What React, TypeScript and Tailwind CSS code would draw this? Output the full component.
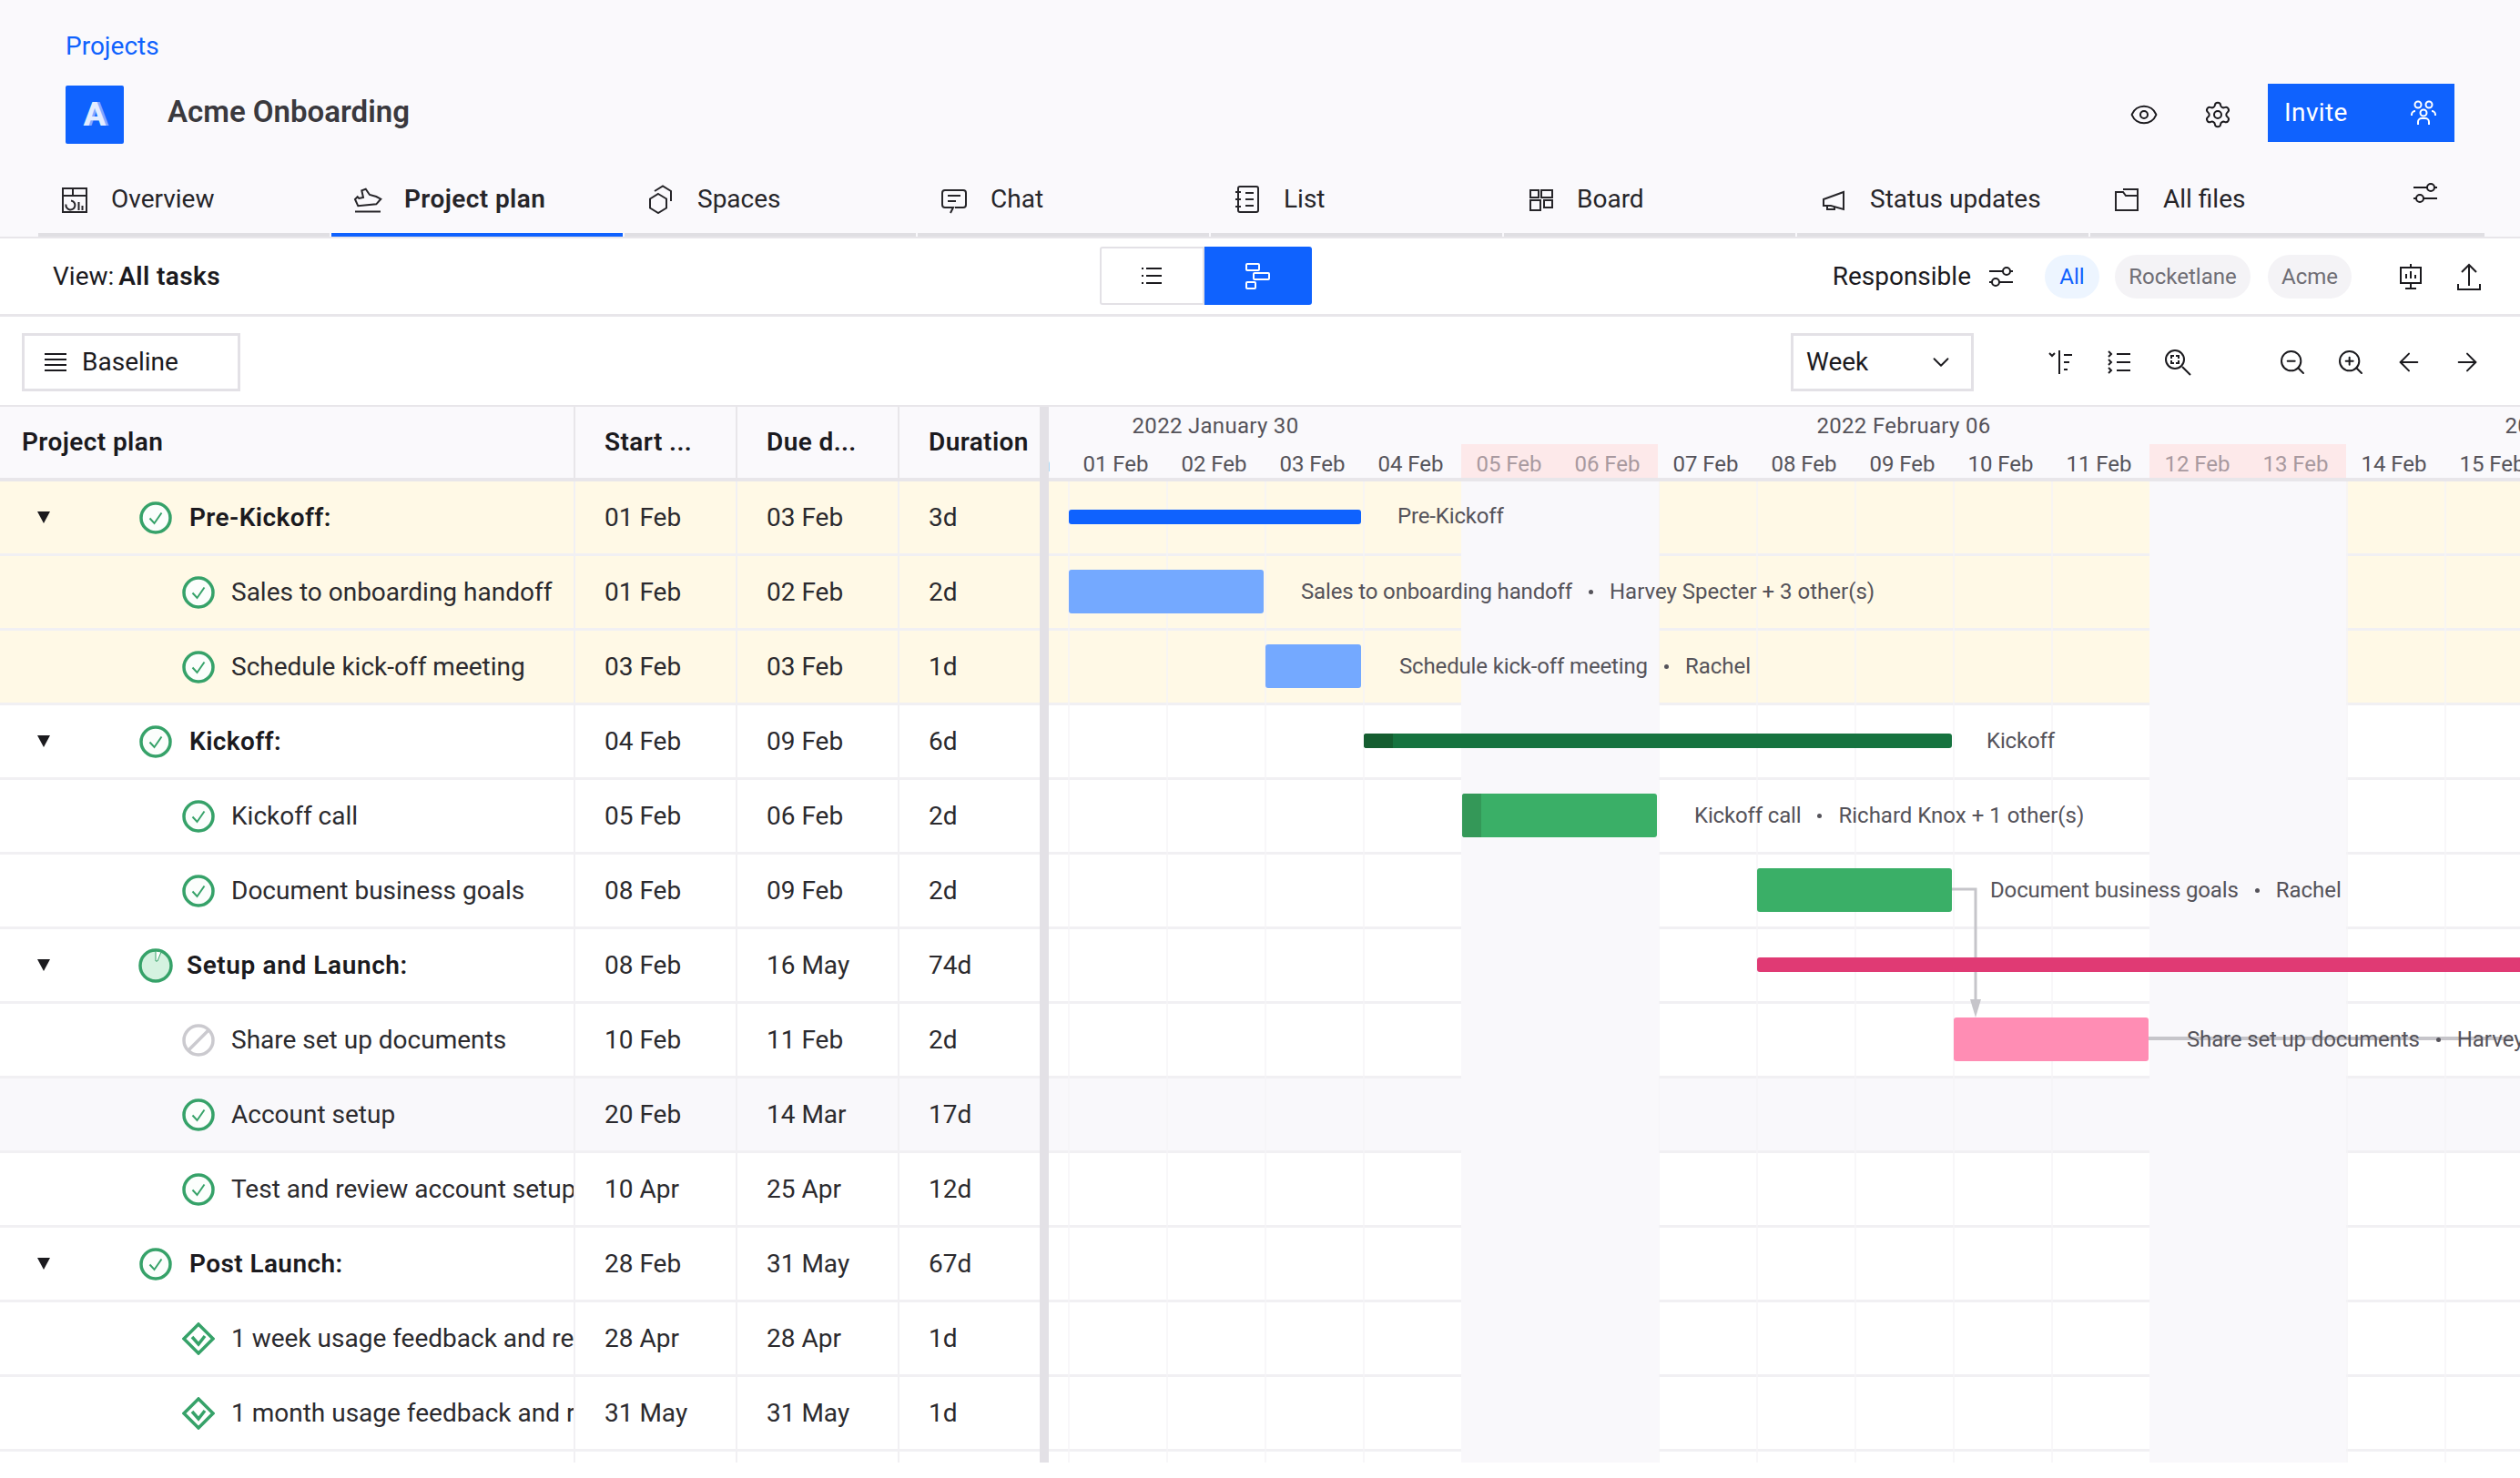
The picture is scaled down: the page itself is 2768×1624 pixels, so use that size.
import { ArrowLeft, ArrowRight, ChevronDown, Eye, Settings, ZoomIn, ZoomOut } from 'lucide-react'

type RowKind = 'done' | 'progress' | 'blocked' | 'milestone'

type Task = {
  name: string
  start: string
  due: string
  duration: string
  kind: RowKind
  group?: boolean
  tone?: 'yellow' | 'hover'
}

const tasks: Task[] = [
  { name: 'Pre-Kickoff:', start: '01 Feb', due: '03 Feb', duration: '3d', kind: 'done', group: true, tone: 'yellow' },
  { name: 'Sales to onboarding handoff', start: '01 Feb', due: '02 Feb', duration: '2d', kind: 'done', tone: 'yellow' },
  { name: 'Schedule kick-off meeting', start: '03 Feb', due: '03 Feb', duration: '1d', kind: 'done', tone: 'yellow' },
  { name: 'Kickoff:', start: '04 Feb', due: '09 Feb', duration: '6d', kind: 'done', group: true },
  { name: 'Kickoff call', start: '05 Feb', due: '06 Feb', duration: '2d', kind: 'done' },
  { name: 'Document business goals', start: '08 Feb', due: '09 Feb', duration: '2d', kind: 'done' },
  { name: 'Setup and Launch:', start: '08 Feb', due: '16 May', duration: '74d', kind: 'progress', group: true },
  { name: 'Share set up documents', start: '10 Feb', due: '11 Feb', duration: '2d', kind: 'blocked' },
  { name: 'Account setup', start: '20 Feb', due: '14 Mar', duration: '17d', kind: 'done', tone: 'hover' },
  { name: 'Test and review account setup', start: '10 Apr', due: '25 Apr', duration: '12d', kind: 'done' },
  { name: 'Post Launch:', start: '28 Feb', due: '31 May', duration: '67d', kind: 'done', group: true },
  { name: '1 week usage feedback and review', start: '28 Apr', due: '28 Apr', duration: '1d', kind: 'milestone' },
  { name: '1 month usage feedback and review', start: '31 May', due: '31 May', duration: '1d', kind: 'milestone' },
  { name: '', start: '', due: '', duration: '', kind: 'done' },
]

const days = ['31 Jan', '01 Feb', '02 Feb', '03 Feb', '04 Feb', '05 Feb', '06 Feb', '07 Feb', '08 Feb', '09 Feb', '10 Feb', '11 Feb', '12 Feb', '13 Feb', '14 Feb', '15 Feb']
const weekend = ['05 Feb', '06 Feb', '12 Feb', '13 Feb']
const gridCols = Array.from({ length: 15 }, (_, i) => i)

const rowTone = (t: Task) =>
  t.tone === 'yellow' ? 'bg-[#fff9e6]' : t.tone === 'hover' ? 'bg-[#f9f8fb]' : 'bg-white'

function Ic({ children, className = 'w-8 h-8 shrink-0' }: { children: React.ReactNode; className?: string }) {
  return (
    <svg viewBox="0 0 32 32" fill="none" stroke="currentColor" strokeWidth="2" className={className}>
      {children}
    </svg>
  )
}

function Adjust({ className }: { className?: string }) {
  return (
    <Ic className={className}>
      <path d="M3 10h15M26 10h3M3 22h3M14 22h15" />
      <circle cx="22" cy="10" r="4" />
      <circle cx="10" cy="22" r="4" />
    </Ic>
  )
}

function StatusIcon({ kind }: { kind: RowKind }) {
  if (kind === 'milestone') {
    return (
      <svg viewBox="0 0 36 36" fill="none" className="w-9 h-9 shrink-0">
        <path d="M18 2 L34 18 L18 34 L2 18 Z" stroke="#36a269" strokeWidth="3.5" />
        <path d="M11 16 L18 24 L25 15" stroke="#36a269" strokeWidth="3.5" />
      </svg>
    )
  }
  if (kind === 'blocked') {
    return (
      <svg viewBox="0 0 36 36" fill="none" className="w-9 h-9 shrink-0">
        <circle cx="18" cy="18" r="16" stroke="#cbcacf" strokeWidth="3.5" fill="#fff" />
        <path d="M7 29 L29 7" stroke="#cbcacf" strokeWidth="3.5" />
      </svg>
    )
  }
  if (kind === 'progress') {
    return (
      <svg viewBox="0 0 38 38" fill="none" className="w-[38px] h-[38px] shrink-0">
        <circle cx="19" cy="19" r="17" stroke="#36a269" strokeWidth="3.5" fill="#d5f2e0" />
        <path d="M19 3 L25 4 L21 14 L19 14 Z" fill="#fff" stroke="#36a269" strokeWidth="1" />
      </svg>
    )
  }
  return (
    <svg viewBox="0 0 36 36" fill="none" className="w-9 h-9 shrink-0">
      <circle cx="18" cy="18" r="16" stroke="#36a269" strokeWidth="3.5" fill="#fbfefc" />
      <path d="M11.5 18.5 L16.5 24 L24.5 12.5" stroke="#36a269" strokeWidth="2" />
    </svg>
  )
}

function Tab({ label, icon, active, wide }: { label: string; icon: React.ReactNode; active?: boolean; wide?: boolean }) {
  return (
    <div
      className={`flex items-center pl-[26px] pb-[13px] h-[66px] border-b-[4px] mr-[2px] text-[#262529] ${wide ? 'w-[433px]' : 'w-[320px]'} ${
        active ? 'border-[#0f62fe] font-semibold tracking-[0.4px]' : 'border-[#e0dfe3]'
      }`}
    >
      <span className="w-[28px] h-[32px] flex items-center justify-center mr-[26px]">{icon}</span>
      <span>{label}</span>
    </div>
  )
}

function Chip({ label, className }: { label: string; className: string }) {
  return (
    <span className={`h-[48px] rounded-[24px] flex items-center justify-center text-[24px] ${className}`}>
      {label}
    </span>
  )
}

function TaskRow({ task }: { task: Task }) {
  return (
    <div className={`flex h-[82px] border-b-[3px] border-[#f1f0f3] ${rowTone(task)}`}>
      <div className="w-[632px] shrink-0 border-r-2 border-[#f1f0f3] flex items-center overflow-hidden whitespace-nowrap">
        {task.name &&
          (task.group ? (
            <>
              <span className="ml-[41px] w-0 h-0 border-x-[7px] border-x-transparent border-t-[13px] border-t-[#1b1a1e] shrink-0" />
              <span className={`flex items-center ${task.kind === 'progress' ? 'ml-[97px] gap-[15px]' : 'ml-[98px] gap-[19px]'}`}>
                <StatusIcon kind={task.kind} />
                <span className={`font-semibold text-[#1b1a1e] ${task.kind === 'progress' ? 'tracking-[0.6px]' : 'tracking-[0.4px]'}`}>{task.name}</span>
              </span>
            </>
          ) : (
            <span className="flex items-center ml-[200px] gap-[18px]">
              <StatusIcon kind={task.kind} />
              <span className="text-[#2b2a2e]">{task.name}</span>
            </span>
          ))}
      </div>
      <div className="w-[178px] shrink-0 border-r-2 border-[#f1f0f3] pl-[32px] flex items-center text-[#2b2a2e]">{task.start}</div>
      <div className="w-[178px] shrink-0 border-r-2 border-[#f1f0f3] pl-[32px] flex items-center text-[#2b2a2e]">{task.due}</div>
      <div className="flex-1 pl-[32px] flex items-center text-[#2b2a2e]">{task.duration}</div>
    </div>
  )
}

function Bar({ className }: { className: string }) {
  return <div className={`absolute rounded-[3px] ${className}`} />
}

function BarLabel({ className, task, who }: { className: string; task: string; who?: string }) {
  return (
    <div className={`absolute flex items-center text-[24px] leading-[32px] text-[#55535a] whitespace-nowrap ${className}`}>
      <span className="tracking-[-0.15px]">{task}</span>
      {who && (
        <>
          <span className="mx-[18px] w-[5px] h-[5px] rounded-full bg-[#55535a]" />
          <span>{who}</span>
        </>
      )}
    </div>
  )
}

export default function App() {
  return (
    <div className="w-[2768px] h-[1624px] overflow-hidden bg-white font-['Roboto',sans-serif] text-[28px] leading-[36px] text-[#1b1a1e]">
      {/* project header */}
      <div className="bg-[#faf9fc] h-[260px] relative">
        <div className="pl-[72px] pt-[33px] text-[#0f62fe]">Projects</div>
        <div className="flex items-center pl-[72px] pr-[72px] mt-[25px] h-[64px]">
          <div className="w-[64px] h-[64px] rounded-[2px] bg-[#0f62fe] flex items-center justify-center">
            <span className="text-[37px] font-bold text-[#e3ecff] [text-shadow:3px_0_0_#7ea9ff]">A</span>
          </div>
          <span className="ml-[48px] -mt-[6px] text-[33px] font-semibold text-[#3a393e]">Acme Onboarding</span>
          <div className="ml-auto flex items-center">
            <Eye className="w-[32px] h-[32px] mr-[49px] text-[#1b1a1e]" strokeWidth={1.5} />
            <Settings className="w-[32px] h-[32px] mr-[39px] text-[#1b1a1e]" strokeWidth={1.5} />
            <div className="w-[205px] h-[64px] -mt-[4px] bg-[#0f62fe] text-white flex items-center justify-between pl-[18px] pr-[18px]">
              <span className="tracking-[0.4px]">Invite</span>
              <Ic className="w-[32px] h-[32px]">
                <circle cx="10" cy="7" r="3.5" />
                <circle cx="22" cy="7" r="3.5" />
                <circle cx="16" cy="16" r="3.5" />
                <path d="M3 19v-1a4 4 0 0 1 4-4M29 19v-1a4 4 0 0 0-4-4M10 29v-3a4 4 0 0 1 4-4h4a4 4 0 0 1 4 4v3" />
              </Ic>
            </div>
          </div>
        </div>
        <div className="absolute left-[42px] bottom-0 flex">
          <Tab
            label="Overview"
            icon={
              <Ic>
                <rect x="3" y="4" width="26" height="26" />
                <path d="M3 12h26M14 4v8M12 17.5a5 5 0 1 1-5.5 4M20.5 19v9M24.5 23v5" />
              </Ic>
            }
          />
          <Tab
            active
            label="Project plan"
            icon={
              <Ic>
                <path d="M2 29.5h28" />
                <path d="M2 16l3.3 7.3 20-2 5-5.6-5-2.7-7.300-2-4.300-6.300-4.400 1.600 1.700 7.700-4.700 1-1.600-1.700z" />
              </Ic>
            }
          />
          <Tab
            label="Spaces"
            icon={
              <Ic>
                <path d="M13 10l9 5.500v10L13 31l-9-5.500v-10z" />
                <path d="M9 7l9-5.500L27 7v11" />
              </Ic>
            }
          />
          <Tab
            label="Chat"
            icon={
              <Ic>
                <path d="M17 25h9a3 3 0 0 0 3-3V9a3 3 0 0 0-3-3H6a3 3 0 0 0-3 3v13a3 3 0 0 0 3 3h9l-3 6" />
                <path d="M9 12h14M9 18h9" />
              </Ic>
            }
          />
          <Tab
            label="List"
            icon={
              <Ic>
                <rect x="6" y="2" width="22" height="28" rx="2" />
                <path d="M3 8h6M3 16h6M3 24h6M14 9h9M14 16h9M14 23h9" />
              </Ic>
            }
          />
          <Tab
            label="Board"
            icon={
              <Ic>
                <rect x="5" y="6" width="9" height="8" />
                <rect x="17" y="6" width="12" height="8" />
                <rect x="5" y="17" width="11" height="11" />
                <rect x="20" y="17" width="9" height="8" />
              </Ic>
            }
          />
          <Tab
            label="Status updates"
            icon={
              <Ic>
                <path d="M27 8v19l-14-4H5v-7z" />
                <path d="M9 23v4h8v-3" />
              </Ic>
            }
          />
          <Tab
            wide
            label="All files"
            icon={
              <Ic>
                <path d="M4 28V8h8l3 4h13v16zM12 5h16v7" />
              </Ic>
            }
          />
        </div>
        <Adjust className="absolute left-[2648px] top-[196px] w-[32px] h-[32px]" />
      </div>

      {/* view toolbar */}
      <div className="h-[88px] border-t-2 border-b-[3px] border-[#e8e6ea] flex items-center pl-[58px] relative">
        <span>
          View: <span className="font-semibold tracking-[0.4px] -ml-[2px]">All tasks</span>
        </span>
        <div className="absolute left-[1208px] top-[9px] h-[64px] flex">
          <div className="w-[115px] border-2 border-[#e3e1e6] rounded-l-[3px] flex items-center justify-center">
            <Ic className="w-[32px] h-[32px]">
              <path d="M9 8h17M9 16h17M9 24h17" />
              <path d="M4 8h2M4 16h2M4 24h2" />
            </Ic>
          </div>
          <div className="w-[118px] bg-[#0f62fe] rounded-r-[3px] flex items-center justify-center text-white">
            <Ic className="w-[32px] h-[32px]">
              <rect x="3" y="3" width="14" height="7" rx="1" />
              <rect x="11" y="13" width="17" height="7" rx="1" />
              <rect x="3" y="23" width="10" height="7" rx="1" />
            </Ic>
          </div>
        </div>
        <div className="ml-auto flex items-center mr-[40px]">
          <span>Responsible</span>
          <Adjust className="w-[32px] h-[32px] ml-[17px]" />
          <div className="flex items-center ml-[32px]">
            <Chip className="w-[60px] mr-[17px] bg-[#edf5ff] text-[#0f62fe]" label="All" />
            <Chip className="w-[149px] mr-[19px] bg-[#f4f3f6] text-[#6f6e75]" label="Rocketlane" />
            <Chip className="w-[92px] bg-[#f4f3f6] text-[#6f6e75]" label="Acme" />
          </div>
          <Ic className="w-[32px] h-[32px] ml-[49px]">
            <path d="M16 2v4M5 6h22v17H5zM16 23v6M10 29h12M11 18v-5M16 18v-8M21 18v-4" />
          </Ic>
          <Ic className="w-[32px] h-[32px] ml-[32px]">
            <path d="M16 3v23M8 11l8-8 8 8M4 24v6h24v-6" />
          </Ic>
        </div>
      </div>

      {/* gantt toolbar */}
      <div className="h-[99px] pt-[3px] border-b-2 border-[#e8e6ea] flex items-center pl-[24px] relative">
        <div className="w-[240px] h-[64px] border-[3px] border-[#e3e1e6] flex items-center pl-[18px] gap-[13px]">
          <Ic className="w-[32px] h-[32px]">
            <path d="M4 7h24M4 13h24M4 19h24M4 25h24" />
          </Ic>
          <span>Baseline</span>
        </div>
        <div className="ml-auto flex items-center pr-[42px]">
          <div className="w-[201px] h-[64px] border-[3px] border-[#e3e1e6] flex items-center justify-between pl-[14px] pr-[18px] mr-[80px]">
            <span>Week</span>
            <ChevronDown className="w-[30px] h-[30px]" strokeWidth={1.5} />
          </div>
          <div className="flex items-center gap-[32px] mr-[94px]">
            <Ic className="w-[32px] h-[32px]">
              <path d="M3 6l3 3 3-3M14 3v26M19 8h9M19 16h6M19 24h4" />
            </Ic>
            <Ic className="w-[32px] h-[32px]">
              <path d="M4 4l3 3-3 3M4 13l3 3-3 3M4 22l3 3-3 3M13 7h15M13 16h15M13 25h15" />
            </Ic>
            <Ic className="w-[32px] h-[32px]">
              <circle cx="13" cy="13" r="10" />
              <path d="M21 21l9 9M9 12V9h3M14 9h3v3M17 14v3h-3M12 17H9v-3" />
            </Ic>
          </div>
          <div className="flex items-center gap-[32px]">
            <ZoomOut className="w-[32px] h-[32px]" strokeWidth={1.5} />
            <ZoomIn className="w-[32px] h-[32px]" strokeWidth={1.5} />
            <ArrowLeft className="w-[32px] h-[32px]" strokeWidth={1.5} />
            <ArrowRight className="w-[32px] h-[32px]" strokeWidth={1.5} />
          </div>
        </div>
      </div>

      {/* plan */}
      <div className="flex h-[1160px] overflow-hidden">
        <div className="w-[1142px] shrink-0">
          <div className="flex h-[82px] bg-[#faf9fc] border-b-[4px] border-[#e8e6ea] font-semibold tracking-[0.4px]">
            <div className="w-[632px] border-r-2 border-[#e8e6ea] pl-[24px] flex items-center">Project plan</div>
            <div className="w-[178px] border-r-2 border-[#e8e6ea] pl-[32px] flex items-center">Start ...</div>
            <div className="w-[178px] border-r-2 border-[#e8e6ea] pl-[32px] flex items-center">Due d...</div>
            <div className="flex-1 pl-[32px] flex items-center">Duration</div>
          </div>
          {tasks.map((t, i) => (
            <TaskRow key={i} task={t} />
          ))}
        </div>
        <div className="w-[10px] shrink-0 bg-[#e3e1e6] z-10" />
        <div className="flex-1 relative overflow-hidden">
          <div className="h-[82px] bg-[#faf9fc] border-b-[4px] border-[#e8e6ea] text-[24px] leading-[32px] text-[#55535a] relative">
            <div className="flex -ml-[195px] h-[41px] items-center whitespace-nowrap tracking-[0.3px]">
              <div className="w-[756px] shrink-0 text-center">2022 January 30</div>
              <div className="w-[756px] shrink-0 text-center">2022 February 06</div>
              <div className="w-[756px] shrink-0 text-center">2022 February 13</div>
            </div>
            <div className="flex -ml-[87px] h-[37px]">
              {days.map((d) => (
                <div
                  key={d}
                  className={`w-[108px] shrink-0 text-center flex items-center justify-center pt-[6px] pr-[3px] ${
                    weekend.includes(d) ? 'bg-[#fde9ea] text-[#a8999f]' : ''
                  }`}
                >
                  {d}
                </div>
              ))}
            </div>
          </div>
          <div className="relative">
            {tasks.map((t, i) => (
              <div key={i} className={`h-[82px] border-b-[3px] border-[#f1f0f3] ${rowTone(t)}`} />
            ))}
            <div className="absolute inset-0 flex pl-[21px]">
              {gridCols.map((c) => (
                <div key={c} className="w-[108px] shrink-0 border-l-2 border-[#f5f4f7]/70" />
              ))}
            </div>
            {/* weekends sit over the row lines */}
            <div className="absolute top-0 bottom-0 left-[453px] w-[217px] bg-[#f9f8fb]" />
            <div className="absolute top-0 bottom-0 left-[1209px] w-[216px] bg-[#f9f8fb]" />

            <Bar className="left-[22px] top-[31px] w-[321px] h-[16px] bg-[#0f62fe]" />
            <BarLabel className="left-[383px] top-[22px]" task="Pre-Kickoff" />
            <Bar className="left-[22px] top-[97px] w-[214px] h-[48px] bg-[#74a9ff]" />
            <BarLabel className="left-[277px] top-[105px]" task="Sales to onboarding handoff" who="Harvey Specter + 3 other(s)" />
            <Bar className="left-[238px] top-[179px] w-[105px] h-[48px] bg-[#74a9ff]" />
            <BarLabel className="left-[385px] top-[187px]" task="Schedule kick-off meeting" who="Rachel" />
            <div className="absolute left-[346px] top-[277px] w-[646px] h-[16px] rounded-[3px] bg-[#16733f] overflow-hidden">
              <div className="w-[32px] h-full bg-[#155d30]" />
            </div>
            <BarLabel className="left-[1030px] top-[269px]" task="Kickoff" />
            <div className="absolute left-[454px] top-[343px] w-[214px] h-[48px] rounded-[3px] bg-[#3aaf67] overflow-hidden">
              <div className="w-[21px] h-full bg-[#349858]" />
            </div>
            <BarLabel className="left-[709px] top-[351px]" task="Kickoff call" who="Richard Knox + 1 other(s)" />
            <Bar className="left-[778px] top-[425px] w-[214px] h-[48px] bg-[#3aaf67]" />
            <BarLabel className="left-[1034px] top-[433px]" task="Document business goals" who="Rachel" />

            {/* dependency connector */}
            <svg className="absolute left-[990px] top-[438px] w-[40px] h-[160px]" viewBox="0 0 40 160" fill="none">
              <path d="M2 10H28V140" stroke="#c6c5ca" strokeWidth="3" />
              <path d="M22 131H34L28 151Z" fill="#c6c5ca" />
            </svg>
            <Bar className="left-[778px] top-[523px] w-[900px] h-[16px] bg-[#e03a74]" />
            <div className="absolute left-[1208px] top-[610px] w-[400px] h-[4px] bg-[#c6c5ca]" />
            <Bar className="left-[994px] top-[589px] w-[214px] h-[48px] bg-[#ff8db4]" />
            <BarLabel className="left-[1250px] top-[597px]" task="Share set up documents" who="Harvey Specter" />
          </div>
        </div>
      </div>
    </div>
  )
}
